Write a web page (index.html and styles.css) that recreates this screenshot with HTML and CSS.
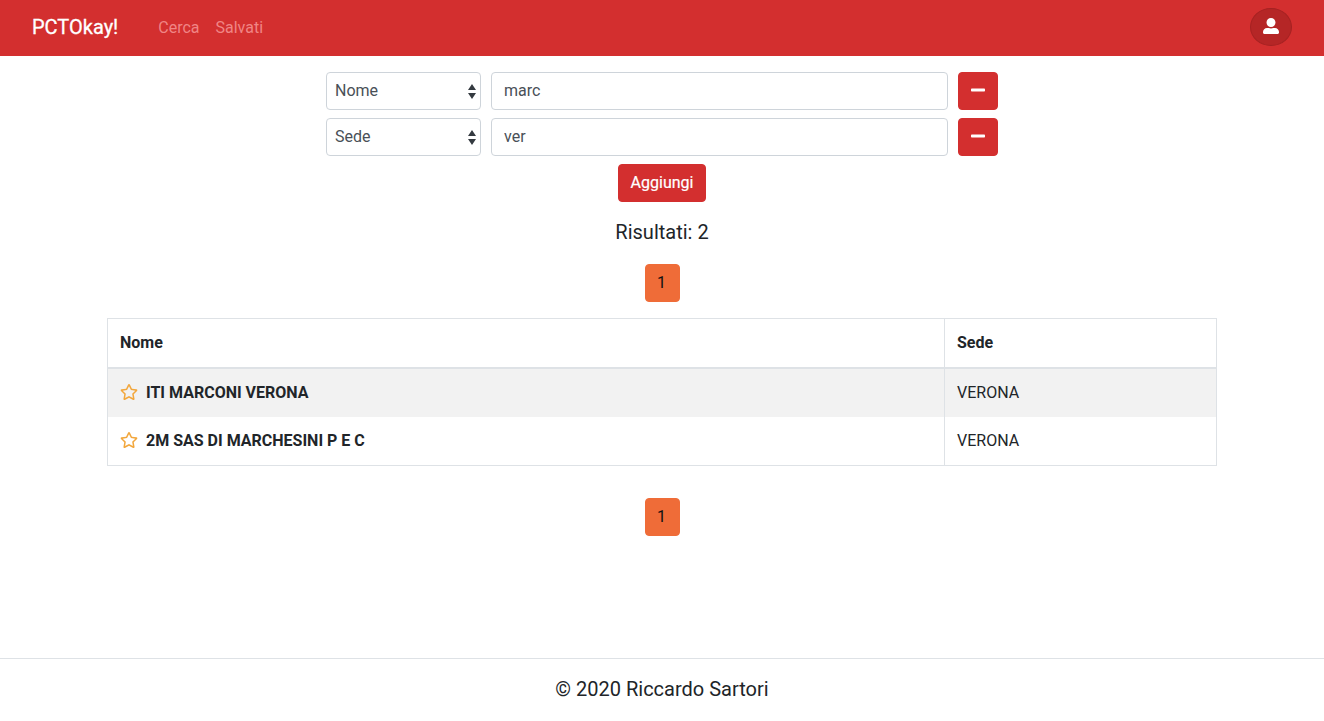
FILE: index.html
```html
<!DOCTYPE html>
<html lang="it">
<head>
<meta charset="utf-8">
<title>PCTOkay!</title>
<link rel="stylesheet" href="styles.css">
</head>
<body>
<svg class="sprite" aria-hidden="true">
  <symbol id="user" viewBox="0 0 512 512"><path d="M256 288c79.5 0 144-64.5 144-144S335.5 0 256 0 112 64.5 112 144s64.5 144 144 144zm128 32h-55.1c-22.2 10.2-46.9 16-72.9 16s-50.6-5.8-72.9-16H128C57.3 320 0 377.3 0 448v16c0 26.5 21.5 48 48 48h416c26.5 0 48-21.5 48-48v-16c0-70.7-57.3-128-128-128z"/></symbol>
  <symbol id="minus" viewBox="0 0 448 512"><path d="M416 208H32c-17.67 0-32 14.33-32 32v32c0 17.67 14.33 32 32 32h384c17.67 0 32-14.33 32-32v-32c0-17.67-14.33-32-32-32z"/></symbol>
  <symbol id="arrows" viewBox="0 0 4 5" preserveAspectRatio="none"><path d="M2 0L0 2h4zm0 5L0 3h4z"/></symbol>
  <symbol id="star" viewBox="0 0 576 512"><path d="M528.1 171.5L382 150.2 316.7 17.8c-11.7-23.6-45.6-23.9-57.4 0L194 150.2 47.9 171.5c-26.2 3.8-36.7 36.1-17.7 54.6l105.7 103-25 145.5c-4.5 26.3 23.2 46 46.4 33.7L288 439.6l130.7 68.7c23.2 12.2 50.9-7.4 46.4-33.7l-25-145.5 105.7-103c19-18.5 8.5-50.8-17.7-54.6zM388.6 312.3l23.7 138.4L288 385.4l-124.3 65.3 23.7-138.4-100.6-98 139-20.2 62.2-126 62.2 126 139 20.2-100.6 98z"/></symbol>
</svg>
<nav class="navbar">
  <a class="brand">PCTOkay!</a>
  <a class="nav-link">Cerca</a>
  <a class="nav-link">Salvati</a>
  <button class="user-btn" aria-label="Utente"><svg class="icon-user"><use href="#user"/></svg></button>
</nav>
<main class="content">
  <form class="filters">
    <div class="filter">
      <div class="select"><span>Nome</span><svg class="icon-arrows"><use href="#arrows"/></svg></div>
      <input class="field" type="text" value="marc">
      <button type="button" class="btn btn-remove" aria-label="Rimuovi"><svg class="icon-minus"><use href="#minus"/></svg></button>
    </div>
    <div class="filter">
      <div class="select"><span>Sede</span><svg class="icon-arrows"><use href="#arrows"/></svg></div>
      <input class="field" type="text" value="ver">
      <button type="button" class="btn btn-remove" aria-label="Rimuovi"><svg class="icon-minus"><use href="#minus"/></svg></button>
    </div>
    <button type="button" class="btn btn-add">Aggiungi</button>
  </form>
  <h5 class="count">Risultati: 2</h5>
  <button class="btn page">1</button>
  <table class="results">
    <thead><tr><th class="name">Nome</th><th>Sede</th></tr></thead>
    <tbody>
      <tr class="striped"><th class="name"><svg class="icon-star"><use href="#star"/></svg>ITI MARCONI VERONA</th><td>VERONA</td></tr>
      <tr><th class="name"><svg class="icon-star"><use href="#star"/></svg>2M SAS DI MARCHESINI P E C</th><td>VERONA</td></tr>
    </tbody>
  </table>
  <button class="btn page">1</button>
</main>
<footer class="footer">© 2020 Riccardo Sartori</footer>
</body>
</html>
```
FILE: styles.css
```css
* { box-sizing: border-box; }
body {
  margin: 0;
  height: 721px;
  display: flex;
  flex-direction: column;
  font: 16px/24px Roboto, sans-serif;
  color: #212529;
  background: #fff;
}
.sprite { display: none; }
svg { display: block; fill: currentColor; }
.navbar {
  height: 56px;
  padding: 0 32px;
  display: flex;
  align-items: center;
  background: #d32f2f;
  color: #fff;
}
.brand { font-size: 20px; line-height: 30px; margin: 0 32px 2px 0; -webkit-text-stroke: .3px; }
.nav-link { padding: 0 8px; color: #f08585; margin-bottom: 1px; }
.user-btn {
  margin: 0 0 2px auto;
  width: 42px;
  height: 38px;
  padding: 0 0 2px;
  display: flex;
  align-items: center;
  justify-content: center;
  border: 1px solid #a52222;
  border-radius: 50%;
  background: #b52626;
  color: #fff;
}
.icon-user { width: 16px; height: 16px; }
.content {
  flex: 1;
  padding-top: 16px;
  display: flex;
  flex-direction: column;
  align-items: center;
}
.filters { display: flex; flex-direction: column; align-items: center; gap: 8px; }
.filter { display: grid; grid-template-columns: 155px 457px 40px; gap: 10px; }
.select, .field {
  height: 38px;
  border: 1px solid #ced4da;
  border-radius: 4px;
  background: #fff;
  color: #495057;
}
.select {
  padding: 0 4px 0 8px;
  display: flex;
  align-items: center;
  justify-content: space-between;
}
.icon-arrows { width: 8px; height: 15px; color: #343a40; }
.field { width: 100%; padding: 0 12px 2px; font: inherit; }
.btn {
  height: 38px;
  padding: 0 12px;
  display: flex;
  align-items: center;
  justify-content: center;
  border: 1px solid #d32f2f;
  border-radius: 4px;
  background: #d32f2f;
  color: #fff;
  font: inherit;
}
.btn-add { -webkit-text-stroke: .2px; }
.btn-remove { padding: 0 0 2px; }
.icon-minus { width: 14px; height: 16px; }
.count { margin: 18px 0 20px; font-size: 20px; font-weight: 400; line-height: 24px; }
.btn.page { width: 35px; padding: 0 13px 0 11px; margin-left: 1px; background: #ef6c38; border-color: #ef6c38; color: #111; }
.results {
  width: 1110px;
  margin: 16px 0 32px;
  table-layout: fixed;
  border-spacing: 0;
  border: 1px solid #dee2e6;
}
.results th, .results td { height: 48px; padding: 0 12px 1px; text-align: left; }
.results th { font-weight: 700; }
.results thead th { height: 50px; padding-bottom: 0; border-bottom: 2px solid #dee2e6; }
.results .name { width: 837px; border-right: 1px solid #dee2e6; }
.striped { background: #f2f2f2; }
.icon-star { display: inline-block; width: 18px; height: 16px; margin-right: 8px; vertical-align: -2px; color: #f2a73d; }
.footer {
  height: 63px;
  padding-top: 15px;
  border-top: 1px solid #dee2e6;
  text-align: center;
  font-size: 20px;
  line-height: 30px;
}
```
